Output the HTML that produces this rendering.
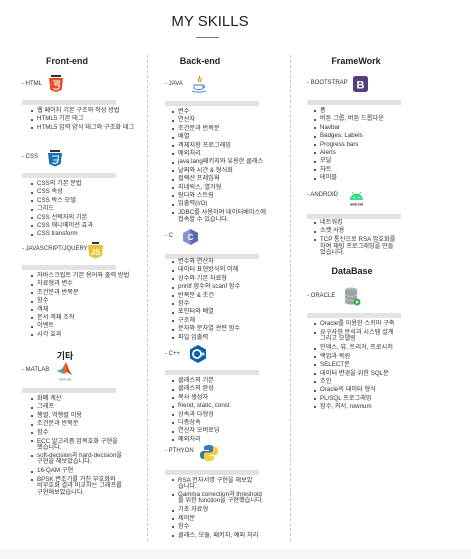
<!DOCTYPE html>
<html><head><meta charset="utf-8"><style>
*{margin:0;padding:0;box-sizing:border-box}
body{width:471px;height:559px;background:#fff;position:relative;overflow:hidden;font-family:"Liberation Sans","Noto Sans CJK KR",sans-serif;color:#333}
.a{position:absolute}
.t{font-size:15px;color:#222;left:0;width:420px;text-align:center;top:13px}
.h{font-size:9px;font-weight:bold;color:#222;text-align:center;width:100px}
.l{font-size:6px;color:#333;white-space:nowrap}
.bar{height:5px;background:#e2e2e2;width:94px}
ul{position:absolute;list-style:none;font-size:6.2px;line-height:8.4px;white-space:nowrap;color:#333}
li{position:relative;padding-left:6px}
li:before{content:"";position:absolute;left:0;top:3.3px;width:2px;height:2px;background:#222;border-radius:1px}
li.m{line-height:6.2px;margin:1.5px 0 2px}
li.m:before{top:1.8px}
.dv{border-left:1px dashed #c8c8c8;top:55px;height:486px;width:0}
</style></head><body>
<div class="a t">MY SKILLS</div>
<div class="a" style="left:196px;top:37px;width:23px;height:1px;background:#777"></div>
<div class="a dv" style="left:147px"></div>
<div class="a dv" style="left:290px"></div>
<div class="a" style="left:0;top:549px;width:471px;height:10px;background:#f5f5f5"></div>

<!-- Front-end -->
<div class="a h" style="left:17px;top:56px">Front-end</div>
<div class="a l" style="left:22px;top:81px">- HTML</div>
<svg class="a" style="left:49px;top:75px" width="14" height="18" viewBox="0 0 14 18"><rect x="2" y="0" width="10" height="2" fill="#333"/><path d="M0 3h14l-1.3 12L7 17l-5.7-2z" fill="#e44d26"/><path d="M4 6h6.5l-.2 2H6l.2 2h4l-.4 3.5L7 14.5 4.4 13.6" fill="none" stroke="#fff" stroke-width="1.1"/></svg>
<div class="a bar" style="left:22px;top:100px"></div>
<ul style="left:31px;top:107px"><li>웹 페이지 기본 구조와 작성 방법</li><li>HTML5 기본 태그</li><li>HTML5 입력 양식 태그와 구조화 태그</li></ul>
<div class="a l" style="left:22px;top:154px">- CSS</div>
<svg class="a" style="left:48px;top:150px" width="14" height="17" viewBox="0 0 14 17"><rect x="2" y="0" width="10" height="2" fill="#333"/><path d="M0 3h14l-1.3 11L7 16.5l-5.7-2.5z" fill="#1572b6"/><path d="M4 6h6.5l-.4 4H5.5M10 10l-.3 2.5L7 13.5 4.4 12.6" fill="none" stroke="#fff" stroke-width="1.1"/></svg>
<div class="a bar" style="left:22px;top:173px"></div>
<ul style="left:31px;top:180px"><li>CSS의 기본 문법</li><li>CSS 속성</li><li>CSS 박스 모델</li><li>그리드</li><li>CSS 선택자의 기본</li><li>CSS 애니메이션 효과</li><li>CSS transform</li></ul>
<div class="a l" style="left:22px;top:246px">- JAVASCRIPT/JQUERY</div>
<svg class="a" style="left:88px;top:242px" width="15" height="17" viewBox="0 0 15 17"><rect x="4" y="0" width="7" height="2" fill="#333"/><path d="M0 3h15l-1.3 11L7.5 16.5l-6.2-2.5z" fill="#e5c42e"/><text x="7.5" y="13" font-size="8" font-weight="bold" fill="#fff" text-anchor="middle" font-family="Liberation Sans">JS</text></svg>
<div class="a bar" style="left:22px;top:265px"></div>
<ul style="left:31px;top:272px"><li>자바스크립트 기본 용어와 출력 방법</li><li>자료형과 변수</li><li>조건문과 반복문</li><li>함수</li><li>객체</li><li>문서 객체 조작</li><li>이벤트</li><li>시각 효과</li></ul>
<div class="a h" style="left:15px;top:349px;font-size:9px">기타</div>
<div class="a l" style="left:22px;top:367px">- MATLAB</div>
<svg class="a" style="left:57px;top:362px" width="16" height="19" viewBox="0 0 16 19"><path d="M0 9l5-2 4-7 3 8 3 5-5-3-3 2z" fill="#e16737"/><path d="M0 9l5-2 2 5z" fill="#2bb1c9"/><path d="M9 0l3 8 3 5-5-3z" fill="#c04a1d"/><text x="8" y="18.5" font-size="3" fill="#555" text-anchor="middle">MATLAB</text></svg>
<div class="a bar" style="left:22px;top:388px"></div>
<ul style="left:31px;top:395px"><li>화폐 계산</li><li>그래프</li><li>행렬, 역행렬 이용</li><li>조건문과 반복문</li><li>함수</li><li class="m">ECC 알고리즘 암복호화 구현을<br>했습니다.</li><li class="m">soft-decision과 hard-decision을<br>구현을 해보았습니다.</li><li>16-QAM 구현</li><li class="m">BPSK 변조기를 거친 부호화와<br>비부호화 결과 비교하는 그래프를<br>구현해보았습니다.</li></ul>

<!-- Back-end -->
<div class="a h" style="left:150px;top:56px">Back-end</div>
<div class="a l" style="left:165px;top:81px">- JAVA</div>
<svg class="a" style="left:192px;top:75px" width="14" height="18" viewBox="0 0 14 18"><path d="M7 1c2 2-2 3 0 6M9 3c1 1-1 2 0 4" fill="none" stroke="#e76f00" stroke-width="1"/><path d="M2 10h9v3c0 2-9 2-9 0zM11 10.5c2 0 2 2 0 2.5M0 16c4 1.5 10 1.5 14 0" fill="none" stroke="#3a7ebf" stroke-width="0.9"/></svg>
<div class="a bar" style="left:165px;top:101px"></div>
<ul style="left:172px;top:108px"><li>변수</li><li>연산자</li><li>조건문과 반복문</li><li>배열</li><li>객체지향 프로그래밍</li><li>예외처리</li><li>java.lang패키지와 유용한 클래스</li><li>날짜와 시간 &amp; 형식화</li><li>컬렉션 프레임웍</li><li>지네릭스, 열거형</li><li>람다와 스트림</li><li>입출력(I/O)</li><li class="m">JDBC를 사용하여 데이터베이스에<br>접속할 수 있습니다.</li></ul>
<div class="a l" style="left:165px;top:233px">- C</div>
<svg class="a" style="left:183px;top:229px" width="15" height="16" viewBox="0 0 15 16"><path d="M7.5 0L15 4v8l-7.5 4L0 12V4z" fill="#5c6bc0" opacity=".75"/><path d="M7.5 0L15 4v8l-7.5 4z" fill="#3f51a0" opacity=".6"/><text x="7.5" y="11" font-size="8" font-weight="bold" fill="#fff" text-anchor="middle">C</text></svg>
<div class="a bar" style="left:165px;top:254px"></div>
<ul style="left:172px;top:258px"><li>변수와 연산자</li><li>데이터 표현방식의 이해</li><li>상수와 기본 자료형</li><li>printf 함수와 scanf 함수</li><li>반복문 &amp; 조건</li><li>함수</li><li>포인터와 배열</li><li>구조체</li><li>문자와 문자열 관련 함수</li><li>파일 입출력</li></ul>
<div class="a l" style="left:165px;top:351px">- C++</div>
<svg class="a" style="left:190px;top:345px" width="16" height="18" viewBox="0 0 16 18"><path d="M8 0l8 4.5v9L8 18 0 13.5v-9z" fill="#0a5fae"/><circle cx="7" cy="9" r="4" fill="none" stroke="#fff" stroke-width="1.8"/><path d="M11 9h4M13 7v4" stroke="#fff" stroke-width=".9"/></svg>
<div class="a bar" style="left:165px;top:370px"></div>
<ul style="left:172px;top:377px"><li>클래스의 기본</li><li>클래스의 완성</li><li>복사 생성자</li><li>friend, static, const</li><li>상속과 다형성</li><li>다중상속</li><li>연산자 오버로딩</li><li>예외처리</li></ul>
<div class="a l" style="left:165px;top:448px">- PTHYON</div>
<svg class="a" style="left:200px;top:444px" width="18" height="18" viewBox="0 0 18 18"><path d="M9 1c-4 0-5 1-5 3v2h5v1H3c-2 0-3 1.5-3 4s1 4 3 4h2v-3c0-1.5 1-2.5 2.5-2.5h4C13 9.5 14 8.5 14 7V4c0-2-2-3-5-3z" fill="#3d7ab3"/><path d="M9 17c4 0 5-1 5-3v-2H9v-1h6c2 0 3-1.5 3-4s-1-4-3-4h-2v3c0 1.5-1 2.5-2.5 2.5h-4C5 8.5 4 9.5 4 11v3c0 2 2 3 5 3z" fill="#f7cf3e"/></svg>
<div class="a bar" style="left:165px;top:470px"></div>
<ul style="left:172px;top:476px"><li class="m">RSA 전자서명 구현을 해보았<br>습니다.</li><li class="m">Gamma correction과 threshold<br>를 위한 function을 구현했습니다.</li><li>기초 자료형</li><li>제어문</li><li>함수</li><li>클래스, 모듈, 패키지, 예외 처리</li></ul>

<!-- FrameWork -->
<div class="a h" style="left:306px;top:56px">FrameWork</div>
<div class="a l" style="left:307px;top:80px">- BOOTSTRAP</div>
<svg class="a" style="left:353px;top:76px" width="15" height="16" viewBox="0 0 15 16"><rect width="15" height="16" rx="2.5" fill="#563d7c"/><text x="7.5" y="12.5" font-size="11" font-weight="bold" fill="#fff" text-anchor="middle">B</text></svg>
<div class="a bar" style="left:307px;top:100px"></div>
<ul style="left:314px;top:107px"><li>폼</li><li>버튼 그룹, 버튼 드롭다운</li><li>Navbar</li><li>Badges, Labels</li><li>Progress bars</li><li>Alerts</li><li>모달</li><li>차트</li><li>테이블</li></ul>
<div class="a l" style="left:307px;top:192px">- ANDROID</div>
<svg class="a" style="left:347px;top:187px" width="19" height="20" viewBox="0 0 19 20"><path d="M3 13a6.5 6.5 0 0 1 13 0z" fill="#3ddc84"/><path d="M5 5l2 3M14 5l-2 3" stroke="#3ddc84" stroke-width=".8"/><circle cx="7" cy="10.5" r=".7" fill="#fff"/><circle cx="12" cy="10.5" r=".7" fill="#fff"/><text x="9.5" y="18.5" font-size="3.5" font-weight="bold" fill="#222" text-anchor="middle">android</text></svg>
<div class="a bar" style="left:307px;top:214px"></div>
<ul style="left:314px;top:219px"><li>네트워킹</li><li>소켓 사용</li><li class="m">TCP 통신으로 RSA 암호화를<br>하여 채팅 프로그래밍을 만들<br>었습니다.</li></ul>
<div class="a h" style="left:302px;top:266px">DataBase</div>
<div class="a l" style="left:307px;top:293px">- ORACLE</div>
<svg class="a" style="left:344px;top:287px" width="17" height="19" viewBox="0 0 17 19"><ellipse cx="7" cy="3" rx="6" ry="2.5" fill="#b0b4b8"/><path d="M1 3v12c0 1.4 2.7 2.5 6 2.5s6-1.1 6-2.5V3" fill="#9ea3a8"/><path d="M1 7c0 1.4 2.7 2.5 6 2.5s6-1.1 6-2.5M1 11c0 1.4 2.7 2.5 6 2.5s6-1.1 6-2.5" fill="none" stroke="#ddd" stroke-width=".6"/><circle cx="13" cy="15" r="3.5" fill="#3cae4c"/><path d="M12 13.3v3.4l2.7-1.7z" fill="#fff"/></svg>
<div class="a bar" style="left:307px;top:313px"></div>
<ul style="left:314px;top:320px"><li>Oracle를 이용한 스키마 구축</li><li class="m">요구사항 분석과 시스템 설계<br>그리고 모델링</li><li>인덱스, 뷰, 트리거, 프로시저</li><li>백업과 복원</li><li>SELECT문</li><li>데이터 변경을 위한 SQL문</li><li>조인</li><li>Oracle의 데이터 형식</li><li>PL/SQL 프로그래밍</li><li>함수, 커서, rownum</li></ul>
</body></html>
